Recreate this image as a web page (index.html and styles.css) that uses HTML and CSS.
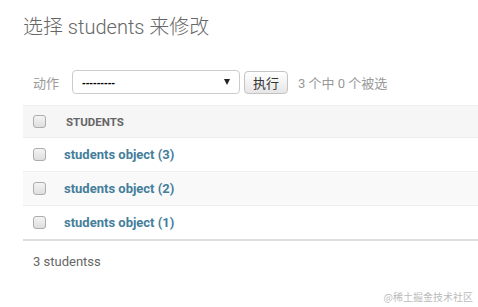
FILE: index.html
```html
<!DOCTYPE html>
<html lang="zh">
<head>
  <meta charset="UTF-8" />
  <title>选择 students 来修改</title>
  <link rel="stylesheet" href="styles.css">
</head>
<body>

  <div class="content">
    <h1>选择 students 来修改</h1>

    <div class="actions">
      <label class="actions-label">动作</label>
      <div class="select">
        <span class="dashes">---------</span>
        <span class="arrow"></span>
      </div>
      <button class="go">执行</button>
      <span class="counter">3 个中 0 个被选</span>
    </div>

    <table class="result-list">
      <thead>
        <tr>
          <th class="check"><input type="checkbox" class="box" /></th>
          <th class="col-name">Students</th>
        </tr>
      </thead>
      <tbody>
        <tr>
          <td class="check"><input type="checkbox" class="box" /></td>
          <th><a href="#">students object (3)</a></th>
        </tr>
        <tr class="alt">
          <td class="check"><input type="checkbox" class="box" /></td>
          <th><a href="#">students object (2)</a></th>
        </tr>
        <tr>
          <td class="check"><input type="checkbox" class="box" /></td>
          <th><a href="#">students object (1)</a></th>
        </tr>
      </tbody>
    </table>

    <p class="paginator">3 studentss</p>
  </div>

  <div class="watermark">@稀土掘金技术社区</div>

</body>
</html>
```

FILE: styles.css
```css
body {
  margin: 0;
  background: #fff;
  color: #333;
  font-family: Roboto, "Noto Sans CJK SC", sans-serif;
  font-size: 13px;
  overflow: hidden;
}
.content {
  padding: 14px 0 0 23px;
}
h1 {
  margin: 0;
  font-size: 20px;
  line-height: 26px;
  font-weight: 300;
  color: #666;
}
.actions {
  display: flex;
  align-items: center;
  height: 24px;
  margin-top: 30px;
  padding-left: 10px;
}
.actions-label {
  color: #999;
  font-size: 13px;
  width: 39px;
}
.select {
  display: flex;
  align-items: center;
  justify-content: space-between;
  box-sizing: border-box;
  width: 168px;
  height: 24px;
  padding: 0 9px 0 9px;
  border: 1px solid #ccc;
  border-radius: 4px;
}
.dashes {
  color: #000;
  font-family: "Liberation Sans", sans-serif;
  font-size: 11px;
  font-weight: 700;
}
.arrow {
  width: 0;
  height: 0;
  border-left: 3.5px solid transparent;
  border-right: 3.5px solid transparent;
  border-top: 6px solid #222;
}
.go {
  margin-left: 4px;
  height: 23px;
  padding: 0 8px;
  font-family: "Noto Sans CJK SC", sans-serif;
  font-size: 13px;
  color: #333;
  background: linear-gradient(#fff, #e6e6e6);
  border: 1px solid #c4c4c4;
  border-radius: 4px;
}
.counter {
  margin-left: 10px;
  color: #999;
  font-size: 13px;
}
.result-list {
  margin-top: 11px;
  width: 460px;
  border-collapse: collapse;
}
.result-list thead th {
  background: #f6f6f6;
  border-top: 1px solid #eee;
  border-bottom: 1px solid #eee;
  height: 31px;
  text-align: left;
  text-transform: uppercase;
  font-size: 11.5px;
  font-weight: 700;
  color: #666;
  padding: 0;
}
.result-list thead th.col-name {
  padding-left: 2px;
}
.result-list td,
.result-list tbody th {
  height: 33px;
  border-bottom: 1px solid #eee;
  text-align: left;
  padding: 0;
}
.result-list tbody tr:last-child td,
.result-list tbody tr:last-child th {
  border-bottom: 2px solid #ddd;
}
.result-list tr.alt td,
.result-list tr.alt th {
  background: #f9f9f9;
}
.result-list .check {
  width: 31px;
  padding: 0 0 0 10px;
}
.box {
  appearance: none;
  display: block;
  margin: 0;
  width: 13px;
  height: 13px;
  border: 1px solid #adadad;
  border-radius: 3px;
  background: linear-gradient(#f4f4f4, #dedede);
}
.result-list a {
  color: #447e9b;
  font-weight: 700;
  font-size: 13px;
  text-decoration: none;
}
.paginator {
  margin: 0;
  padding: 13px 0 0 10px;
  color: #666;
  font-size: 13px;
}
.watermark {
  position: absolute;
  right: 5px;
  bottom: 3px;
  color: #bbb;
  font-family: "Noto Sans CJK SC", serif;
  font-size: 10px;
}
```
